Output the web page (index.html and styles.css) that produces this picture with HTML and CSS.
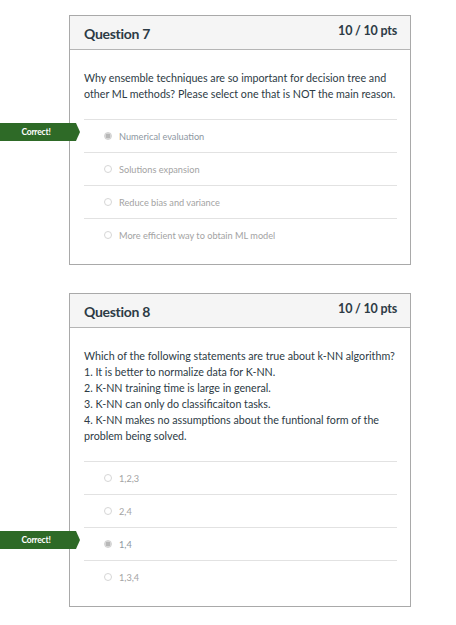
FILE: index.html
```html
<!DOCTYPE html>
<html>
<head>
<meta charset="utf-8">
<link rel="stylesheet" href="styles.css">
</head>
<body>
<div class="page">
  <div class="card q7">
    <div class="card-head">
      <div class="title">Question 7</div>
      <div class="pts">10 / 10 pts</div>
    </div>
    <div class="card-body">
      <div class="qtext">Why ensemble techniques are so important for decision tree and other ML methods? Please select one that is NOT the main reason.</div>
      <div class="answers">
        <div class="answer selected">
          <span class="banner">Correct!</span>
          <span class="radio"></span><span class="label">Numerical evaluation</span>
        </div>
        <div class="answer"><span class="radio"></span><span class="label">Solutions expansion</span></div>
        <div class="answer"><span class="radio"></span><span class="label">Reduce bias and variance</span></div>
        <div class="answer"><span class="radio"></span><span class="label">More efficient way to obtain ML model</span></div>
      </div>
    </div>
  </div>

  <div class="card q8">
    <div class="card-head">
      <div class="title">Question 8</div>
      <div class="pts">10 / 10 pts</div>
    </div>
    <div class="card-body">
      <div class="qtext">Which of the following statements are true about k-NN algorithm?<br>1. It is better to normalize data for K-NN.<br>2. K-NN training time is large in general.<br>3. K-NN can only do classificaiton tasks.<br>4. K-NN makes no assumptions about the funtional form of the problem being solved.</div>
      <div class="answers">
        <div class="answer"><span class="radio"></span><span class="label">1,2,3</span></div>
        <div class="answer"><span class="radio"></span><span class="label">2,4</span></div>
        <div class="answer selected">
          <span class="banner">Correct!</span>
          <span class="radio"></span><span class="label">1,4</span>
        </div>
        <div class="answer"><span class="radio"></span><span class="label">1,3,4</span></div>
      </div>
    </div>
  </div>
</div>
</body>
</html>
```

FILE: styles.css
```css
html, body {
  margin: 0;
  padding: 0;
  background: #fff;
}
body {
  font-family: Lato, "Open Sans", "Liberation Sans", sans-serif;
  color: #2d3b45;
}
.page {
  padding: 15px 0 0 69px;
  display: flex;
  flex-direction: column;
  gap: 28px;
}
.card {
  width: 340px;
  border: 1px solid #a9a9a9;
  position: relative;
}
.card-head {
  height: 33px;
  background: #f5f5f5;
  border-bottom: 1px solid #b5b5b5;
  display: flex;
  justify-content: space-between;
  align-items: flex-start;
  padding: 0 13px 0 14px;
}
.title {
  font-size: 14px;
  font-weight: 700;
  line-height: 16px;
  padding-top: 10px;
  letter-spacing: -0.3px;
}
.pts {
  font-size: 12.5px;
  font-weight: 700;
  line-height: 14px;
  padding-top: 8px;
  letter-spacing: -0.2px;
}
.card-body {
  padding: 20px 13px 13px 14px;
}
.qtext {
  font-size: 10.7px;
  line-height: 16px;
  color: #2d3b45;
}
.answers {
  margin-top: 17px;
}
.answer {
  position: relative;
  height: 33px;
  border-top: 1px solid #e2e2e2;
  display: flex;
  align-items: center;
  padding-left: 20px;
  box-sizing: border-box;
}
.radio {
  width: 6px;
  height: 6px;
  border-radius: 50%;
  border: 1px solid #d6d6d6;
  background: #fff;
  margin-right: 7px;
  flex: none;
}
.selected .radio {
  background: radial-gradient(circle, #b8b8b8 0 2.2px, #dcdcdc 2.6px);
  border-color: #d2d2d2;
}
.label {
  font-size: 9.2px;
  color: #a3a3a3;
}
.selected .label {
  color: #8d979f;
}
.banner {
  position: absolute;
  left: -84px;
  top: 3px;
  width: 76px;
  height: 18px;
  background: #2e6a27;
  color: #fff;
  font-size: 8.5px;
  font-weight: 700;
  line-height: 18px;
  text-align: center;
  padding-right: 4px;
  box-sizing: border-box;
  letter-spacing: -0.2px;
}
.banner::after {
  content: "";
  position: absolute;
  right: -4px;
  top: 0;
  border-left: 4px solid #2e6a27;
  border-top: 9px solid transparent;
  border-bottom: 9px solid transparent;
}
```
